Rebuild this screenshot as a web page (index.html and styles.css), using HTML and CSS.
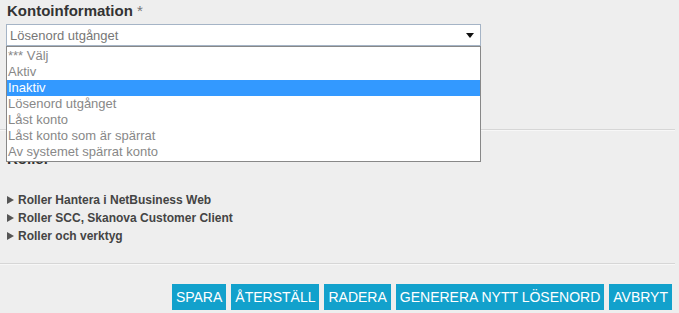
FILE: index.html
```html
<!DOCTYPE html>
<html lang="sv">
<head>
    <meta charset="UTF-8" />
    <title>Kontoinformation</title>
    <link rel="stylesheet" href="styles.css">
</head>
<body>
    <section class="account">
        <h2 class="field-title">Kontoinformation <span class="req">*</span></h2>
        <div class="select-wrap">
            <div class="select-box">
                <span class="select-value">Lösenord utgånget</span>
                <span class="select-arrow"></span>
            </div>
            <ul class="select-list">
                <li>*** Välj</li>
                <li>Aktiv</li>
                <li class="active">Inaktiv</li>
                <li>Lösenord utgånget</li>
                <li>Låst konto</li>
                <li>Låst konto som är spärrat</li>
                <li>Av systemet spärrat konto</li>
            </ul>
        </div>
    </section>
    <hr class="divider">
    <section class="roles">
        <h2 class="field-title">Roller</h2>
        <ul class="tree">
            <li>Roller Hantera i NetBusiness Web</li>
            <li>Roller SCC, Skanova Customer Client</li>
            <li>Roller och verktyg</li>
        </ul>
    </section>
    <hr class="divider">
    <div class="actions">
        <button class="btn">Spara</button>
        <button class="btn">Återställ</button>
        <button class="btn">Radera</button>
        <button class="btn">Generera nytt lösenord</button>
        <button class="btn">Avbryt</button>
    </div>
</body>
</html>
```

FILE: styles.css
```css
body {
    font-family: 'Liberation Sans', Arial, sans-serif;
    margin: 0;
    background-color: #eeeeee;
    color: #444;
    width: 679px;
    height: 313px;
    overflow: hidden;
}

.account {
    padding: 2px 0 0 7px;
    height: 127px;
}

.field-title {
    font-size: 15px;
    font-weight: bold;
    color: #333;
    margin: 0 0 4px 0;
    line-height: 18px;
}

.req {
    color: #777;
    font-weight: normal;
}

/* Выпадающий список */
.select-wrap {
    position: relative;
    width: 475px;
    margin-left: -1px;
}

.select-box {
    border: 1px solid #a5b4c6;
    background-color: #fff;
    display: flex;
    align-items: center;
    justify-content: space-between;
    padding: 0 6px 0 3px;
    box-sizing: border-box;
    height: 22px;
}

.select-value {
    font-size: 13px;
    color: #777;
}

.select-arrow {
    width: 0;
    height: 0;
    border-left: 4px solid transparent;
    border-right: 4px solid transparent;
    border-top: 5px solid #111;
}

.select-list {
    position: absolute;
    top: 22px;
    left: 0;
    width: 475px;
    box-sizing: border-box;
    list-style: none;
    margin: 0;
    padding: 1px 0;
    background-color: #fff;
    border: 1px solid #888;
    z-index: 10;
}

.select-list li {
    font-size: 13px;
    line-height: 16px;
    color: #888;
    padding-left: 1px;
}

.select-list li.active {
    background-color: #3399ff;
    color: #fff;
}

.divider {
    border: 0;
    border-top: 1px solid #d6d6d6;
    border-bottom: 1px solid #f7f7f7;
    margin: 0 4px 0 0;
}

.roles {
    padding: 19px 0 0 7px;
    height: 132px;
    box-sizing: border-box;
}

.tree {
    list-style: none;
    margin: 23px 0 0 0;
    padding: 0;
}

.tree li {
    font-size: 12px;
    font-weight: bold;
    color: #444;
    line-height: 18px;
}

.tree li::before {
    content: "";
    display: inline-block;
    border-top: 4px solid transparent;
    border-bottom: 4px solid transparent;
    border-left: 7px solid #555;
    margin-right: 4px;
}

.actions {
    display: flex;
    justify-content: flex-end;
    gap: 5px;
    padding: 19px 7px 0 0;
}

.btn {
    font-family: 'Liberation Sans', Arial, sans-serif;
    background-color: #12a1cc;
    color: #fff;
    border: none;
    font-size: 14px;
    text-transform: uppercase;
    height: 26px;
    padding: 0 4px;
    cursor: pointer;
}
```
